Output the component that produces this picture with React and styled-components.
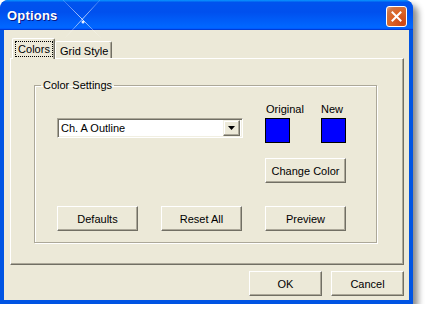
import React from "react";
import styled, { createGlobalStyle } from "styled-components";

const GlobalStyle = createGlobalStyle`
  html, body { margin: 0; padding: 0; background: #ffffff; }
  body { font-family: "Liberation Sans", Arial, sans-serif; font-size: 11px; color: #000; }
  * { box-sizing: border-box; }
`;

const Window = styled.div`
  position: relative;
  width: 413px;
  height: 304px;
  display: flex;
  flex-direction: column;
  background: #0054e3;
  border-radius: 8px 8px 0 0;
  box-shadow: 5px 5px 6px rgba(0, 0, 0, 0.45);
  overflow: hidden;
`;

const TitleBar = styled.div`
  height: 30px;
  flex: 0 0 30px;
  display: flex;
  align-items: center;
  justify-content: space-between;
  padding: 0 6px 0 7px;
  background: linear-gradient(180deg, #0997ff, #0053ee 8%, #0050ee 40%, #0066ff 88%, #0066ff 93%, #005bff 95%, #003dd7 96%, #003dd7);
  border-radius: 8px 8px 0 0;
`;

const Title = styled.span`
  font-family: "Liberation Sans", Arial, sans-serif;
  font-weight: bold;
  font-size: 13px;
  color: #fff;
  text-shadow: 1px 1px 0 #0a1883;
  letter-spacing: 0.2px;
  margin-top: 1px;
`;

const CloseButton = styled.div`
  width: 21px;
  height: 21px;
  border: 1px solid #fff;
  border-radius: 3px;
  background: radial-gradient(circle at 80% 85%, #cc4616 0%, #dc6527 55%, #cd7546 80%, #e9a48a 100%);
  display: flex;
  align-items: center;
  justify-content: center;
  margin-top: 2px;
`;

const Glint = styled.svg`
  position: absolute;
  left: 55px;
  top: 0;
  pointer-events: none;
`;

const Body = styled.div`
  flex: 1;
  margin: 0 4px 4px 4px;
  background: #ece9d8;
  display: flex;
  flex-direction: column;
  padding: 8px 5px 4px 6px;
`;

const TabStrip = styled.div`
  display: flex;
  align-items: flex-end;
  height: 20px;
  padding-left: 2px;
  position: relative;
  z-index: 1;
`;

const Tab = styled.div`
  height: ${(p) => (p.$active ? "21px" : "17px")};
  margin-bottom: ${(p) => (p.$active ? "-1px" : "0")};
  padding: ${(p) => (p.$active ? "2px 1px 2px 2px" : "2px 3px 0 4px")};
  background: #ece9d8;
  border-top: 1px solid #fff;
  border-left: 1px solid #fff;
  border-right: 1px solid #716f64;
  box-shadow: inset -1px 0 0 #aca899;
  border-radius: 2px 2px 0 0;
  display: flex;
  align-items: ${(p) => (p.$active ? "stretch" : "center")};
  line-height: 13px;
  font-size: 11px;
`;

const FocusLabel = styled.span`
  border: 1px dotted #000;
  padding: 1px 0 0 0;
  display: flex;
  align-items: center;
  justify-content: center;
  width: 38px;
`;

const TabPanel = styled.div`
  height: 207px;
  border-top: 1px solid #fff;
  border-left: 1px solid #fff;
  border-right: 1px solid #716f64;
  border-bottom: 1px solid #716f64;
  box-shadow: inset -1px -1px 0 #aca899;
  padding: 20px 26px 0 23px;
`;

const GroupBox = styled.fieldset`
  margin: 0;
  padding: 0 10px 11px 22px;
  border: 1px solid #aca899;
  box-shadow: 1px 1px 0 #fff, inset 1px 1px 0 #fff;
  min-width: 0;
`;

const Legend = styled.legend`
  padding: 0 2px;
  margin-left: -16px;
  line-height: 13px;
  font-size: 11px;
`;

const SettingsGrid = styled.div`
  display: grid;
  grid-template-columns: 186px 81px;
  column-gap: 22px;
  margin-top: 11px;
`;

const ComboBox = styled.div`
  grid-column: 1;
  grid-row: 1 / span 2;
  align-self: end;
  margin-bottom: 5px;
  height: 20px;
  background: #fff;
  border-top: 1px solid #aca899;
  border-left: 1px solid #aca899;
  border-right: 1px solid #fff;
  border-bottom: 1px solid #fff;
  box-shadow: inset 1px 1px 0 #716f64, inset -1px -1px 0 #f1efe2;
  display: flex;
  align-items: center;
  padding: 2px 2px 2px 3px;
`;

const ComboText = styled.span`
  flex: 1;
  line-height: 13px;
`;

const DropButton = styled.div`
  width: 17px;
  height: 16px;
  background: #ece9d8;
  border-top: 1px solid #f1efe2;
  border-left: 1px solid #f1efe2;
  border-right: 1px solid #716f64;
  border-bottom: 1px solid #716f64;
  box-shadow: inset -1px -1px 0 #aca899, inset 1px 1px 0 #fff;
  display: flex;
  align-items: center;
  justify-content: center;
`;

const SwatchArea = styled.div`
  grid-column: 2;
  grid-row: 1 / span 2;
  display: grid;
  grid-template-columns: 56px 25px;
  row-gap: 2px;
`;

const SwatchLabel = styled.span`
  line-height: 13px;
  white-space: nowrap;
  padding-left: ${(p) => (p.$indent ? "1px" : "0")};
`;

const Swatch = styled.div`
  width: 25px;
  height: 25px;
  background: ${(p) => p.$color};
  border: 1px solid #000;
`;

const Button = styled.div`
  width: ${(p) => p.$w || 81}px;
  height: 25px;
  background: #ece9d8;
  border-top: 1px solid #fff;
  border-left: 1px solid #fff;
  border-right: 1px solid #716f64;
  border-bottom: 1px solid #716f64;
  box-shadow: inset -1px -1px 0 #aca899;
  display: flex;
  align-items: center;
  justify-content: center;
  font-size: 11px;
  line-height: 13px;
  padding-top: 1px;
`;

const ChangeColorCell = styled.div`
  grid-column: 2;
  margin-top: 15px;
`;

const ButtonRow = styled.div`
  grid-column: 1 / span 2;
  display: flex;
  gap: 23px;
  margin-top: 23px;
`;

const DialogButtons = styled.div`
  display: flex;
  justify-content: flex-end;
  gap: 9px;
  margin-top: 6px;
`;

export default function App() {
  return (
    <>
      <GlobalStyle />
      <Window>
        <TitleBar>
          <Title>Options</Title>
          <CloseButton>
            <svg width="11" height="11" viewBox="0 0 11 11">
              <path d="M1.5 1.5 L9.5 9.5 M9.5 1.5 L1.5 9.5" stroke="#fff" strokeWidth="2" strokeLinecap="square" />
            </svg>
          </CloseButton>
        </TitleBar>
        <Glint width="50" height="42" viewBox="0 0 50 42">
          <defs>
            <linearGradient id="g1" x1="0" y1="0" x2="0" y2="1">
              <stop offset="0" stopColor="#fff" stopOpacity="0.15" />
              <stop offset="0.5" stopColor="#fff" stopOpacity="0.75" />
              <stop offset="1" stopColor="#fff" stopOpacity="0.05" />
            </linearGradient>
          </defs>
          <path d="M8 0 L46 38 M45 0 L10 38" stroke="url(#g1)" strokeWidth="1" fill="none" />
          <circle cx="28" cy="22" r="1.5" fill="#fff" opacity="0.9" />
        </Glint>
        <Body>
          <TabStrip>
            <Tab $active>
              <FocusLabel>Colors</FocusLabel>
            </Tab>
            <Tab>Grid Style</Tab>
          </TabStrip>
          <TabPanel>
            <GroupBox>
              <Legend>Color Settings</Legend>
              <SettingsGrid>
                <ComboBox>
                  <ComboText>Ch. A Outline</ComboText>
                  <DropButton>
                    <svg width="7" height="4" viewBox="0 0 7 4">
                      <path d="M0 0 H7 L3.5 4 Z" fill="#000" />
                    </svg>
                  </DropButton>
                </ComboBox>
                <SwatchArea>
                  <SwatchLabel $indent>Original</SwatchLabel>
                  <SwatchLabel>New</SwatchLabel>
                  <Swatch $color="#0000ff" />
                  <Swatch $color="#0000ff" />
                </SwatchArea>
                <ChangeColorCell>
                  <Button>Change Color</Button>
                </ChangeColorCell>
                <ButtonRow>
                  <Button>Defaults</Button>
                  <Button>Reset All</Button>
                  <Button>Preview</Button>
                </ButtonRow>
              </SettingsGrid>
            </GroupBox>
          </TabPanel>
          <DialogButtons>
            <Button $w={73}>OK</Button>
            <Button $w={73}>Cancel</Button>
          </DialogButtons>
        </Body>
      </Window>
    </>
  );
}
